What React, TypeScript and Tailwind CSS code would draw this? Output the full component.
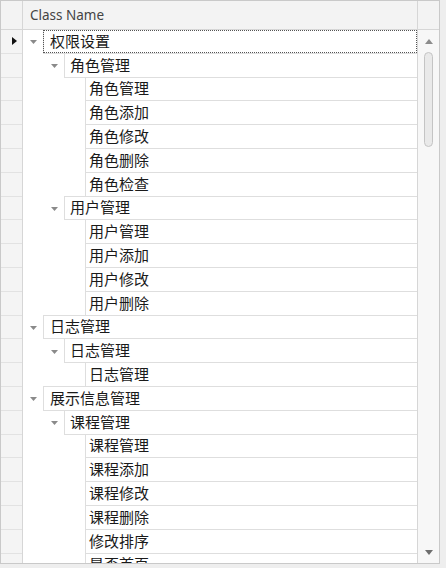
import React from 'react';

type Node = { text: string; level: 0 | 1 | 2; expandable?: boolean };

const rows: Node[] = [
  { text: '权限设置', level: 0, expandable: true },
  { text: '角色管理', level: 1, expandable: true },
  { text: '角色管理', level: 2 },
  { text: '角色添加', level: 2 },
  { text: '角色修改', level: 2 },
  { text: '角色删除', level: 2 },
  { text: '角色检查', level: 2 },
  { text: '用户管理', level: 1, expandable: true },
  { text: '用户管理', level: 2 },
  { text: '用户添加', level: 2 },
  { text: '用户修改', level: 2 },
  { text: '用户删除', level: 2 },
  { text: '日志管理', level: 0, expandable: true },
  { text: '日志管理', level: 1, expandable: true },
  { text: '日志管理', level: 2 },
  { text: '展示信息管理', level: 0, expandable: true },
  { text: '课程管理', level: 1, expandable: true },
  { text: '课程管理', level: 2 },
  { text: '课程添加', level: 2 },
  { text: '课程修改', level: 2 },
  { text: '课程删除', level: 2 },
  { text: '修改排序', level: 2 },
  { text: '是否首页', level: 2 },
];

const indentClass = ['w-[20px]', 'w-[41px]', 'w-[62px]'];
const padClass = ['pl-[6px]', 'pl-[5px]', 'pl-[3px]'];

function ExpandGlyph() {
  return (
    <svg width="7" height="4" viewBox="0 0 7 4" className="mt-[2px]">
      <path d="M0 0 H7 L3.5 4 Z" fill="#8a8a8a" />
    </svg>
  );
}

function TreeRow({ node, focused }: { node: Node; focused?: boolean }) {
  return (
    <div className="flex h-[24.8px] -mt-px shrink-0">
      <div className={`${indentClass[node.level]} shrink-0 flex items-center justify-end pr-[6px]`}>
        {node.expandable && <ExpandGlyph />}
      </div>
      <div
        className={`relative flex-1 flex items-center border-y border-l border-[#dedede] ${padClass[node.level]} text-[15px] text-[#1a1a1a] leading-none`}
      >
        {focused && (
          <div className="absolute -left-px right-0 top-0 bottom-0 border border-dotted border-[#555]" />
        )}
        <span>{node.text}</span>
      </div>
    </div>
  );
}

export default function App() {
  return (
    <div className="w-[446px] h-[568px] bg-[#eeeeee] overflow-hidden">
      <div
        className="w-[440px] h-[564px] bg-white border border-[#c9c9c9] flex flex-col overflow-hidden"
        style={{ fontFamily: '"Noto Sans", "Noto Sans CJK SC", sans-serif' }}
      >
        {/* Header */}
        <div className="flex h-[29px] shrink-0 bg-[#f3f3f3] border-b border-[#d6d6d6]">
          <div className="w-[22px] shrink-0 border-r border-[#d6d6d6]" />
          <div className="flex-1 flex items-center pl-[7px] text-[13.5px] text-[#444]">Class Name</div>
          <div className="w-[22px] shrink-0 border-l border-[#d6d6d6]" />
        </div>

        {/* Body */}
        <div className="flex flex-1 overflow-hidden">
          {/* Row indicators */}
          <div className="w-[22px] shrink-0 flex flex-col bg-[#f4f4f4] border-r border-[#d6d6d6]">
            {rows.map((_, i) => (
              <div key={i} className="h-[24.8px] -mt-px shrink-0 flex items-center pl-[11px] border-y border-[#e2e2e2]">
                {i === 0 && (
                  <svg width="5" height="8" viewBox="0 0 5 8">
                    <path d="M0 0 L5 4 L0 8 Z" fill="#111" />
                  </svg>
                )}
              </div>
            ))}
          </div>

          {/* Tree */}
          <div className="flex-1 flex flex-col overflow-hidden">
            {rows.map((node, i) => (
              <TreeRow key={i} node={node} focused={i === 0} />
            ))}
          </div>

          {/* Scrollbar */}
          <div className="w-[22px] shrink-0 flex flex-col items-center bg-[#f7f7f7] border-l border-[#d6d6d6]">
            <div className="h-[22px] flex items-center justify-center">
              <svg width="8" height="5" viewBox="0 0 8 5">
                <path d="M0 5 L4 0 L8 5 Z" fill="#8c8c8c" />
              </svg>
            </div>
            <div className="w-[9px] h-[95px] rounded-full bg-[#e9e9e9] border border-[#c4c4c4]" />
            <div className="flex-1" />
            <div className="h-[22px] flex items-center justify-center">
              <svg width="8" height="5" viewBox="0 0 8 5">
                <path d="M0 0 L8 0 L4 5 Z" fill="#6e6e6e" />
              </svg>
            </div>
          </div>
        </div>
      </div>
    </div>
  );
}
